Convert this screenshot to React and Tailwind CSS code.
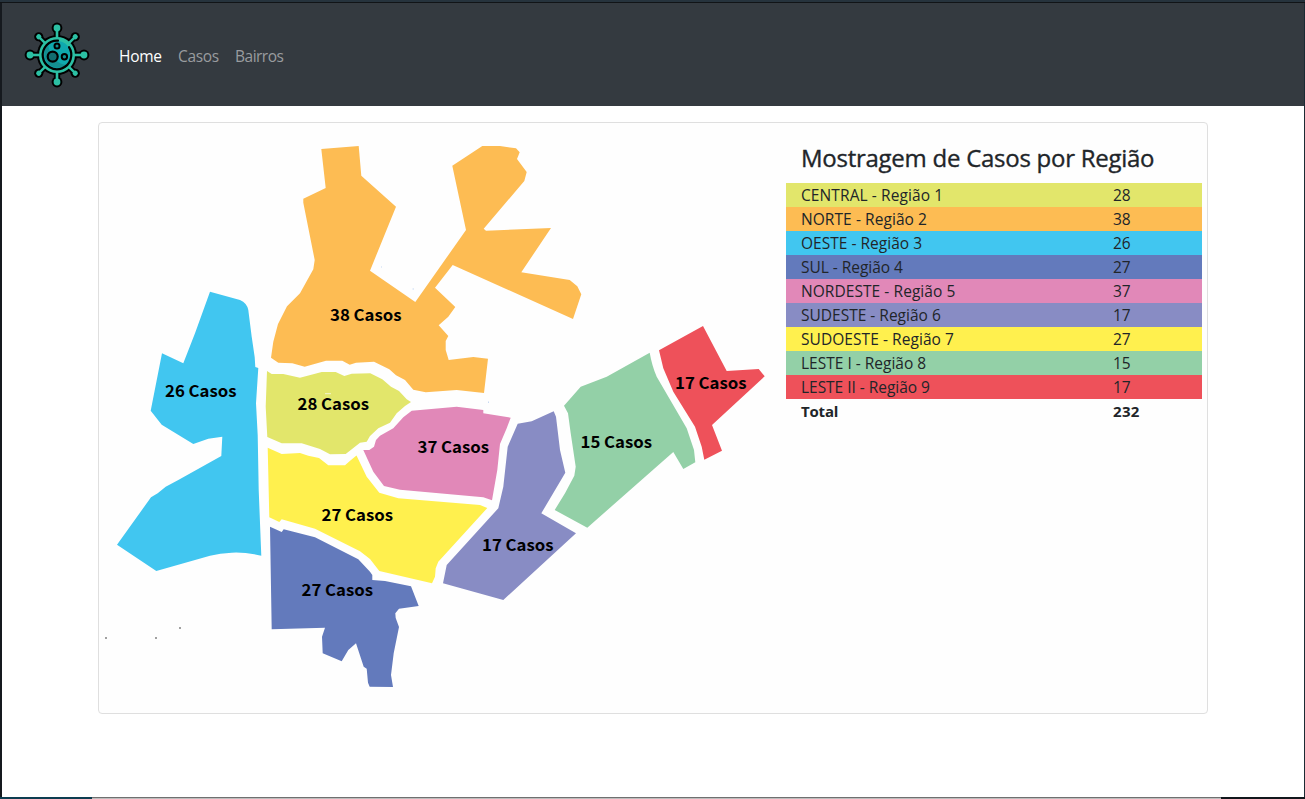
const regions = [
  { name: "CENTRAL - Região 1", cases: 28, row: "bg-[#e2e66b]", tracking: "tracking-[0.1px]" },
  { name: "NORTE - Região 2", cases: 38, row: "bg-[#fdbc53]", tracking: "tracking-[0.07px]" },
  { name: "OESTE - Região 3", cases: 26, row: "bg-[#41c6f0]", tracking: "tracking-[0.02px]" },
  { name: "SUL - Região 4", cases: 27, row: "bg-[#637abc]", tracking: "tracking-[-0.04px]" },
  { name: "NORDESTE - Região 5", cases: 37, row: "bg-[#e188b8]", tracking: "tracking-[0.06px]" },
  { name: "SUDESTE - Região 6", cases: 17, row: "bg-[#888cc4]", tracking: "tracking-[0px]" },
  { name: "SUDOESTE - Região 7", cases: 27, row: "bg-[#fff04e]", tracking: "tracking-[0.06px]" },
  { name: "LESTE I - Região 8", cases: 15, row: "bg-[#93d0a7]", tracking: "tracking-[0px]" },
  { name: "LESTE II - Região 9", cases: 17, row: "bg-[#ee515a]", tracking: "tracking-[-0.03px]" },
];

const shapes = [
  { fill: "#fdbc53", d: "M321.3 149L358.7 146L361.3 175.7L396 206.7L370 270.7L415.3 302L466 230L452.3 165.7L482.3 146L500 146L516 148.3L519.7 152.3L517 159L526.7 172L524.3 181L483.7 228.7L486 230.7L551 228L521.3 272.3L569.7 280L577.3 286.3L581.3 294.3L573 319L452.7 265L435 287.7L455.3 307L448.3 316.7L438.7 325.3L448.3 336L445.7 341L445.7 350L448.7 360L473.3 357L488 358.7L484 393L456.7 390L425.7 392.3L413.3 389.7L405 380L396 375.3L389.3 369.3L374 361.7L356 362.7L349.7 364.7L342.3 360.7L326 360.7L304.7 366.7L292.3 363.3L278.3 362.7L271 357.7L273.3 341.7L278 324L287 306.3L300 293.3L313.3 269.3L314.7 260L303.3 202.7L303.3 198.7L325.7 188Z" },
  { fill: "#41c6f0", d: "M210 291.7L240 300Q247 303 248.3 310L251.7 336.7L254.7 357.3L255.3 367L258.3 368L256 403.3L257.7 435L258.7 490L261.3 555.7Q245 552 231.7 552.7Q220 553 210 555.7L156.3 571L117 544.7L151 497.3L157.7 493.3L165.7 486.7L178.3 480L221.3 456L222.3 436.7L208.3 438.7L193.3 444L161.7 424.7L150.7 410.7L162 353.3L183.3 363.3L195 333.3Z" },
  { fill: "#e2e66b", d: "M267 371L271.7 374L283.3 374L300 377.7L321.7 372L335.7 372L344.3 376L351.7 373.7L370.3 373.3L382.3 379.3L391 386.7L399 391L406.7 399.3L411 402L405 406L396.7 413.3L390 422.7L378.3 428.3L370 436L366.7 441.7L360 442.7L345.7 454L330 454.3L320 449L301.7 443.3L281.7 443.3L267.3 437L265.7 406.7Z" },
  { fill: "#e188b8", d: "M411.7 410.7L456.7 406.7L483.3 410L483.3 413.3L510.7 417.7L506.7 428.3L500 444L497.3 470L492 500.3L483.3 497.3L400 489.7L384 486L373.3 471.7L363.3 450L369.3 450L374 446.7L376 440L380 435.7L393.3 428.3L403.3 417.3Z" },
  { fill: "#fff04e", d: "M267.7 447.7L281.7 454L300 453L308.3 455.7L319 458L328.3 465.3L345 465.3L351 460L356.5 455.5L366.7 476.7L379.3 492.7L398.3 498.3L480 505L487.3 508L438.3 561.7L435.7 568.3L435 576.7L432 583.3L379.3 571L370 559L360 551.3L315 528.7L281.7 519.3L279.3 522L269.3 517.3Z" },
  { fill: "#637abc", d: "M270 526.7L281.7 532L283.7 529.3L315 537.3L358.3 559.3L370 571.7L372.3 575L372.3 580L385 581L411 586.3L418.7 606L399 608.7L395.3 613.3L395.7 618L399 627L393.7 653.3L391 675L393 687L369.7 686.7L368 682.7L366.7 668.7L363.7 666.7L356 643.3L348.3 650L341.7 661.3L322.7 653.3L322 636.7L325 627.7L271.7 629.3Z" },
  { fill: "#888cc4", d: "M517.7 423.7L531.7 421.3L553.7 411.3L556 416.7L560 450L565.3 472.7L541.3 513.3L576 533.3L503.3 600L443 583.3L446.7 565L498.3 508.3L503.3 486.7L507.7 446.7Z" },
  { fill: "#93d0a7", d: "M649.7 352.7Q652 366 656.7 376.7L686.7 428.3L694 450L695.3 462.3L683.3 469L673.3 452L587.3 527.7L554.7 510L565 493.3L574.3 475.7L575.7 466.7L570.7 433.3L568 413.3L564 405.7L580.7 386.7L606.7 376.7Z" },
  { fill: "#ee515a", d: "M703 326L726.7 371L758.7 369L764.7 376.3L712 425L722 450.7L704.3 459.7L701.7 446.7L695 426.7L673.3 391.7L663.3 368.3L659 350.3Z" },
];

const labels = [
  { x: 330, y: 321, text: "38 Casos" },
  { x: 165, y: 396.5, text: "26 Casos" },
  { x: 297.5, y: 410, text: "28 Casos" },
  { x: 417.5, y: 453, text: "37 Casos" },
  { x: 321.5, y: 521, text: "27 Casos" },
  { x: 301.5, y: 595.5, text: "27 Casos" },
  { x: 482, y: 550.5, text: "17 Casos" },
  { x: 580.5, y: 448, text: "15 Casos" },
  { x: 675, y: 389, text: "17 Casos" },
];

const arms = [0, 45, 90, 135, 180, 225, 270, 315];

function Spike({ angle, diagonal }) {
  return (
    <g transform={`rotate(${angle})`}>
      {diagonal ? (
        <>
          <path d="M0 -16V-25" stroke="#000" strokeWidth="6" />
          <circle cy="-25.8" r="4.6" fill="#000" />
          <path d="M0 -15V-25" stroke="#2cc0a4" strokeWidth="2.4" />
          <circle cy="-25.8" r="2.6" fill="#2cc0a4" />
        </>
      ) : (
        <>
          <path d="M0 -16V-27" stroke="#000" strokeWidth="6.4" />
          <circle cy="-27" r="5.4" fill="#000" />
          <path d="M0 -15V-27" stroke="#2cc0a4" strokeWidth="2.6" />
          <circle cy="-27" r="3.4" fill="#2cc0a4" />
        </>
      )}
    </g>
  );
}

function VirusLogo() {
  return (
    <svg className="size-16 shrink-0 overflow-visible" viewBox="-32 -32 64 64" aria-hidden="true">
      <circle r="20" fill="#000" />
      {arms.map((a) => <Spike key={a} angle={a} diagonal={a % 90 !== 0} />)}
      <circle r="18" fill="#2cc0a4" />
      <circle r="14" fill="#0fa9ae" />
      <path d="M-9 -10A13.5 13.5 0 0 0 9 10Q-5 8 -9 -10Z" fill="#148f91" />
      <path d="M1 -14.3A14.3 14.3 0 1 0 12 -7.8" fill="none" stroke="#000" strokeWidth="2.2" strokeLinecap="round" />
      <circle cx="-4.3" cy="1.6" r="5" fill="#126d70" stroke="#000" strokeWidth="2.2" />
      <circle cx="0" cy="-9" r="2.5" fill="#148f91" stroke="#000" strokeWidth="2" />
      <circle cx="7.4" cy="1.8" r="2.7" fill="#148f91" stroke="#000" strokeWidth="2" />
    </svg>
  );
}

function Navbar() {
  return (
    <nav className="flex h-[103px] items-center bg-[#343a40] pl-[23px] pt-px font-['Open_Sans','Noto_Sans',sans-serif] text-[15.5px] leading-6">
      <VirusLogo />
      <div className="ml-[30px] flex gap-4 pt-px">
        <a className="w-[43px] whitespace-nowrap tracking-[-0.3px] text-white">Home</a>
        <a className="w-[41px] whitespace-nowrap tracking-[-0.35px] text-[#999c9f]">Casos</a>
        <a className="whitespace-nowrap tracking-[-0.5px] text-[#999c9f]">Bairros</a>
      </div>
    </nav>
  );
}

function RegionMap() {
  return (
    <svg className="h-[590px] w-[687px] shrink-0" viewBox="99 123 687 590">
      {shapes.map((s) => <path key={s.fill} fill={s.fill} d={s.d} />)}
      <g className="fill-black font-['Noto_Sans_CJK_SC',sans-serif] text-[16px] font-bold">
        {labels.map((l) => (
          <text key={`${l.x}-${l.y}`} x={l.x} y={l.y} textLength="71.5" lengthAdjust="spacingAndGlyphs">{l.text}</text>
        ))}
      </g>
      <path d="M105 638h2M155 638h2M179 628h2" stroke="#444" strokeWidth="1.2" />
      <path d="M325 393.7h6" stroke="#f4f5cf" strokeWidth="1" />
      <path d="M488.500 401.500v1.500M412.500 289h1.500M381 267h1" stroke="#c7d9f2" strokeWidth="1" />
    </svg>
  );
}

function CaseTable() {
  return (
    <section className="w-[416px] pt-[20px]">
      <h1 className="h-10 whitespace-nowrap pl-[15px] text-[24px] font-medium leading-[29px] tracking-[-0.26px] [-webkit-text-stroke:0.35px]">Mostragem de Casos por Região</h1>
      {regions.map((r) => (
        <div key={r.name} className={`flex h-6 px-[15px] ${r.row}`}>
          <span className={`w-[312px] text-[15.5px] ${r.tracking}`}>{r.name}</span>
          <span className="text-[15.5px]">{r.cases}</span>
        </div>
      ))}
      <div className="flex h-6 px-[15px] font-bold">
        <span className="w-[312px] tracking-[-0.2px]">Total</span>
        <span className="tracking-[0.3px]">232</span>
      </div>
    </section>
  );
}

export default function App() {
  return (
    <div className="flex h-[799px] w-[1305px] flex-col overflow-hidden bg-white">
      <div className="h-[2px] shrink-0 bg-[#26333d]" />
      <div className="h-px shrink-0 bg-[#111417]" />
      <div className="flex-1 border-l-2 border-r border-l-[#15191e] border-r-[#1b2a33] bg-white">
        <Navbar />
        <main className="ml-24 mt-4 flex h-[592px] w-[1110px] rounded border border-[#dfdfdf] bg-[#fefefe] font-['Open_Sans','Noto_Sans',sans-serif] text-[15px] leading-6 text-[#212529]">
          <RegionMap />
          <CaseTable />
        </main>
      </div>
      <div className="flex h-[2px] shrink-0">
        <div className="w-[92px] bg-[#0d3d50]" />
        <div className="flex-1 border-t border-[#707070] bg-[#bdbdbd]" />
        <div className="w-[84px] bg-[#11171c]" />
      </div>
    </div>
  );
}
